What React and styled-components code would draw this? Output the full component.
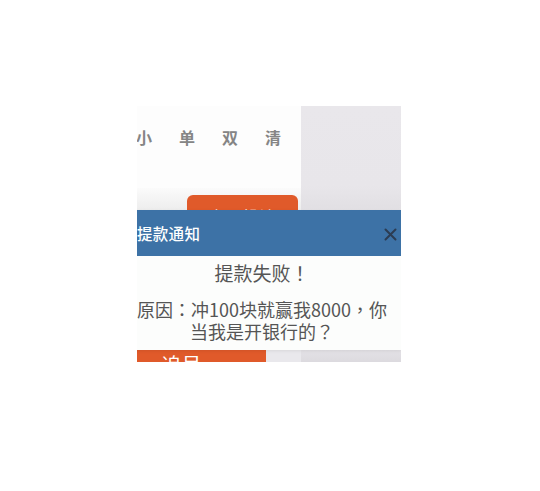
import React from "react"
import styled, { createGlobalStyle } from "styled-components"

const GlobalStyle = createGlobalStyle`
  html, body {
    margin: 0;
    padding: 0;
    background: #ffffff;
  }
  body {
    font-family: "Noto Sans CJK SC", "Noto Sans", sans-serif;
  }
`

const Screen = styled.div`
  position: relative;
  width: 264px;
  height: 256px;
  margin: 106px 0 0 137px;
  overflow: hidden;
  display: flex;
`

const MainColumn = styled.div`
  width: 164px;
  display: flex;
  flex-direction: column;
  flex-shrink: 0;
`

const SidePanel = styled.div`
  flex: 1;
  background: linear-gradient(
    to bottom,
    #e9e7eb 0px,
    #e8e6ea 80px,
    #e2e0e4 100px,
    #e6e4e8 120px,
    #e6e4e8 240px,
    #dcdadf 256px
  );
`

const TabRow = styled.div`
  height: 82px;
  background: #fdfdfd;
  display: flex;
  align-items: flex-start;
  gap: 27px;
  margin-left: -44px;
  padding-top: 21px;
  box-sizing: border-box;
`

const Tab = styled.span`
  width: 16px;
  font-size: 16px;
  line-height: 20px;
  font-weight: 700;
  color: #858585;
  flex-shrink: 0;
`

const ActionArea = styled.div`
  height: 162px;
  background: linear-gradient(to bottom, #fbfbfb 0px, #ededed 22px, #eeeeee 162px);
  padding: 7px 0 0 50px;
  box-sizing: border-box;
`

const OrangeButton = styled.div`
  width: ${p => p.$width}px;
  height: ${p => p.$height}px;
  background: #e05a2a;
  color: #ffffff;
  border-radius: ${p => p.$radius}px;
  font-size: ${p => p.$size}px;
  line-height: ${p => p.$line}px;
  text-align: center;
  flex-shrink: 0;
`

const BottomBar = styled.div`
  flex: 1;
  display: flex;
  align-items: flex-start;
  margin-left: -40px;
  background: #e9e8ec;
  overflow: hidden;
`

const Dialog = styled.div`
  position: absolute;
  left: -14px;
  top: 104px;
  width: 278px;
  box-shadow: 0 1px 3px rgba(0, 0, 0, 0.08);
`

const DialogHeader = styled.div`
  height: 46px;
  background: #3d72a6;
  display: flex;
  align-items: center;
  justify-content: space-between;
  padding: 0 4px 0 14px;
  box-sizing: border-box;
`

const DialogTitle = styled.span`
  color: #ffffff;
  font-size: 15.5px;
  font-weight: 500;
  letter-spacing: 0.3px;
`

const CloseButton = styled.button`
  width: 14px;
  height: 14px;
  padding: 0;
  border: 0;
  background: none;
  display: flex;
  align-items: center;
  justify-content: center;
  margin-top: 2px;
`

const DialogBody = styled.div`
  background: #fcfdfc;
  padding: 4px 10px 8px;
  text-align: center;
  color: #555555;
  font-family: "Noto Sans CJK TC", "Noto Sans CJK SC", sans-serif;
`

const Headline = styled.div`
  font-size: 19px;
  line-height: 26px;
`

const Reason = styled.div`
  margin-top: 12px;
  font-size: 18px;
  line-height: 22px;
`

const CloseIcon = () => (
  <svg width="13" height="13" viewBox="0 0 13 13">
    <path d="M1.5 1.5 L11.5 11.5 M11.5 1.5 L1.5 11.5" stroke="#2c3c52" strokeWidth="2" strokeLinecap="round" />
  </svg>
)

const tabs = ["大", "小", "单", "双", "清"]

export default function App() {
  return (
    <>
      <GlobalStyle />
      <Screen>
        <MainColumn>
          <TabRow>
            {tabs.map(t => (
              <Tab key={t}>{t}</Tab>
            ))}
          </TabRow>
          <ActionArea>
            <OrangeButton $width={111} $height={44} $line={44} $radius={6} $size={17}>立即投注</OrangeButton>
          </ActionArea>
          <BottomBar>
            <OrangeButton $width={169} $height={40} $line={30} $radius={0} $size={20}>追号</OrangeButton>
          </BottomBar>
        </MainColumn>
        <SidePanel />
        <Dialog>
          <DialogHeader>
            <DialogTitle>提款通知</DialogTitle>
            <CloseButton>
              <CloseIcon />
            </CloseButton>
          </DialogHeader>
          <DialogBody>
            <Headline>提款失败！</Headline>
            <Reason>原因：冲100块就赢我8000，你当我是开银行的？</Reason>
          </DialogBody>
        </Dialog>
      </Screen>
    </>
  )
}
